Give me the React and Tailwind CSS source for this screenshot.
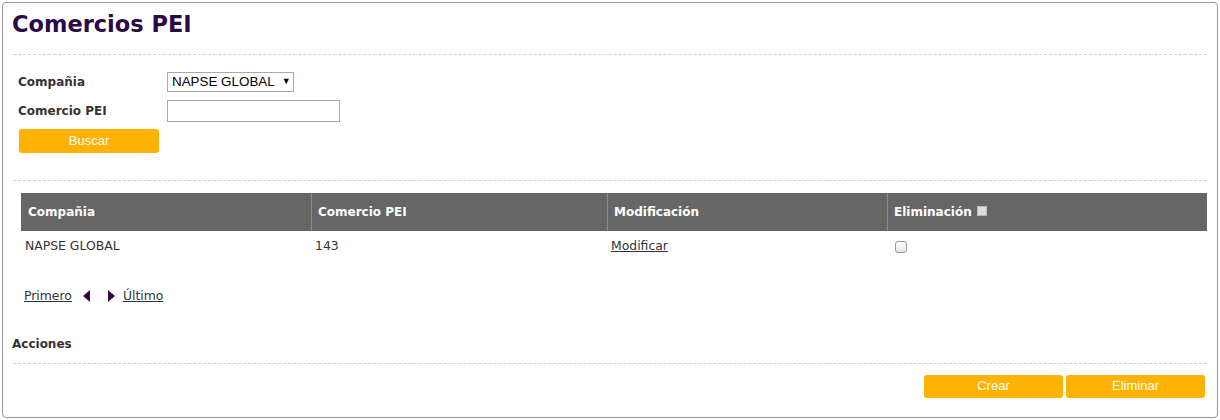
import React from "react";

const verdana = { fontFamily: '"DejaVu Sans", Verdana, sans-serif' };
const arial = { fontFamily: '"Liberation Sans", Arial, sans-serif' };

function Dashed() {
  return <div className="mx-[10px] border-t border-dashed border-[#cfcfcf]" />;
}

function Btn({ children, className = "" }) {
  return (
    <button
      className={
        "rounded-[3px] bg-[#ffb300] text-[13px] font-normal text-white " + className
      }
      style={arial}
    >
      {children}
    </button>
  );
}

export default function App() {
  return (
    <div className="h-[420px] w-[1220px] bg-white p-[2px]" style={verdana}>
      <div className="h-[416px] w-[1216px] rounded-[4px] border border-[#9a9a9a]">
        <h1 className="pl-[9px] pt-[8px] text-[22.5px] font-bold leading-[26px] text-[#2b0a45]">
          Comercios PEI
        </h1>
        <div className="mt-[17px]">
          <Dashed />
        </div>

        <div className="pl-[15px] pt-[17px] text-[12px] font-bold text-[#333]">
          <div className="flex h-[20px] items-center">
            <span className="w-[149px]">Compañia</span>
            <div
              className="flex h-[20px] w-[127px] shrink-0 items-center whitespace-nowrap border border-[#a9a9a9] pl-[4px] text-[13.4px] font-normal text-black"
              style={arial}
            >
              NAPSE GLOBAL
              <span className="ml-[7px] text-[9px]">▼</span>
            </div>
          </div>
          <div className="mt-[8px] flex h-[22px] items-center">
            <span className="w-[149px]">Comercio PEI</span>
            <div className="h-[22px] w-[173px] border border-[#a9a9a9]" />
          </div>
          <Btn className="ml-[1px] mt-[7px] h-[24px] w-[140px]">Buscar</Btn>
        </div>

        <div className="mt-[27px]">
          <Dashed />
        </div>

        <div className="ml-[18px] mr-[10px] mt-[12px]">
          <div className="flex h-[38px] bg-[#666] text-[12px] font-bold text-white">
            <div className="flex w-[291px] items-center border-r border-[#888] pl-[7px]">Compañia</div>
            <div className="flex w-[296px] items-center border-r border-[#888] pl-[6px]">Comercio PEI</div>
            <div className="flex w-[280px] items-center border-r border-[#888] pl-[6px]">Modificación</div>
            <div className="flex flex-1 items-center pl-[6px]">
              Eliminación
              <span className="ml-[5px] mb-[3px] inline-block h-[10px] w-[10px] border border-[#bbb] bg-[#ddd]" />
            </div>
          </div>
          <div className="flex h-[31px] items-center text-[12.4px] text-[#333]">
            <div className="w-[291px] pl-[4px]">NAPSE GLOBAL</div>
            <div className="w-[296px] pl-[3px]">143</div>
            <div className="w-[280px] pl-[3px] underline">Modificar</div>
            <div className="flex-1 pl-[7px]">
              <span className="block h-[12px] w-[12px] rounded-[3px] border border-[#999] bg-gradient-to-b from-white to-[#e4e4e4]" />
            </div>
          </div>
        </div>

        <div className="mt-[25px] flex items-center pl-[21px] text-[12.4px] text-[#333]">
          <span className="underline">Primero</span>
          <svg width="8" height="12" viewBox="0 0 8 12" className="ml-[10px]">
            <polygon points="8,0 8,12 1,6" fill="#2b0a45" />
          </svg>
          <svg width="8" height="12" viewBox="0 0 8 12" className="ml-[18px]">
            <polygon points="0,0 0,12 7,6" fill="#2b0a45" />
          </svg>
          <span className="ml-[7px] underline">Último</span>
        </div>

        <div className="mt-[29px] pl-[9px] text-[12px] font-bold text-[#333]">Acciones</div>
        <div className="mt-[10px]">
          <Dashed />
        </div>

        <div className="mr-[12px] mt-[11px] flex justify-end gap-[3px]">
          <Btn className="h-[23px] w-[139px]">Crear</Btn>
          <Btn className="h-[23px] w-[139px]">Eliminar</Btn>
        </div>
      </div>
    </div>
  );
}
